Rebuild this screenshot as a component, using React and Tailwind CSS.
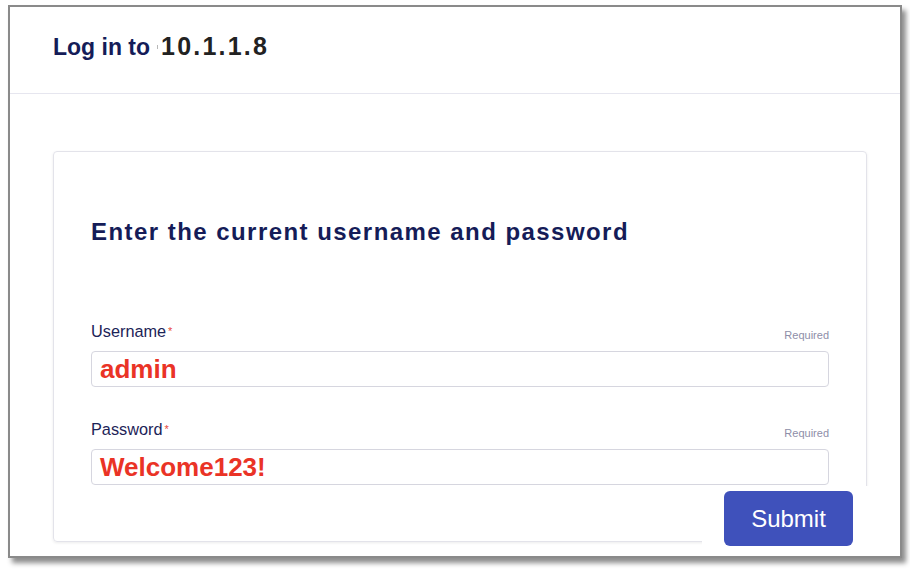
export default function App() {
  const font = { fontFamily: '"Liberation Sans", Arial, sans-serif' };

  return (
    <div className="min-h-[570px] w-[910px] bg-white pt-[5px] pl-[8px]" style={font}>
      {/* framed window */}
      <div className="relative w-[894px] h-[553px] border-2 border-[#8a8a8a] bg-white shadow-[4px_5px_5px_rgba(0,0,0,0.45)]">
        {/* Header */}
        <header className="h-[87px] border-b border-[#e6e6ef] pl-[43px] pt-[25px]">
          <h1 className="flex items-baseline">
            <span className="text-[23px] font-bold text-[#151c58] leading-[28px]">Log in to</span>
            <span className="ml-[7px] mr-[3px] inline-block w-px h-[4px] bg-[#b8b8b8] self-center" />
            <span className="text-[25px] font-bold tracking-[2.2px] text-[#222222] leading-[28px]">10.1.1.8</span>
          </h1>
        </header>

        {/* Card */}
        <div className="mt-[57px] ml-[43px] w-[814px] h-[391px] rounded-[4px] border border-[#e3e3ea] shadow-[0_1px_3px_rgba(0,0,0,0.08)] px-[37px] pt-[66px]">
          <h2 className="text-[24px] leading-[28px] font-bold tracking-[1.45px] text-[#151c58]">
            Enter the current username and password
          </h2>

          {/* Username */}
          <div className="mt-[75px] flex items-end justify-between">
            <label className="text-[16.3px] leading-[20px] text-[#1c2357]">
              Username<span className="ml-[2px] text-[11px] align-top text-[#e8483c]">*</span>
            </label>
            <span className="text-[11px] leading-[12px] text-[#8e8ea8]">Required</span>
          </div>
          <div className="mt-[10px] h-[36px] rounded-[4px] border border-[#d6d6df] flex items-center pl-[8px]">
            <span className="text-[26px] leading-[26px] font-bold text-[#ea3326]">admin</span>
          </div>

          {/* Password */}
          <div className="mt-[32px] flex items-end justify-between">
            <label className="text-[16.3px] leading-[20px] text-[#1c2357]">
              Password<span className="ml-[2px] text-[11px] align-top text-[#e8483c]">*</span>
            </label>
            <span className="text-[11px] leading-[12px] text-[#8e8ea8]">Required</span>
          </div>
          <div className="mt-[10px] h-[36px] rounded-[4px] border border-[#d6d6df] flex items-center pl-[8px]">
            <span className="text-[26px] leading-[26px] font-bold text-[#ea3326]">Welcome123!</span>
          </div>
        </div>

        {/* pasted submit button patch */}
        <div className="absolute left-[692px] top-[479px] w-[175px] h-[70px] bg-white pl-[22px] pt-[5px]">
          <button className="w-[129px] h-[55px] rounded-[6px] bg-[#3f51bb] text-white text-[24px] leading-none">
            Submit
          </button>
        </div>
      </div>
    </div>
  );
}
